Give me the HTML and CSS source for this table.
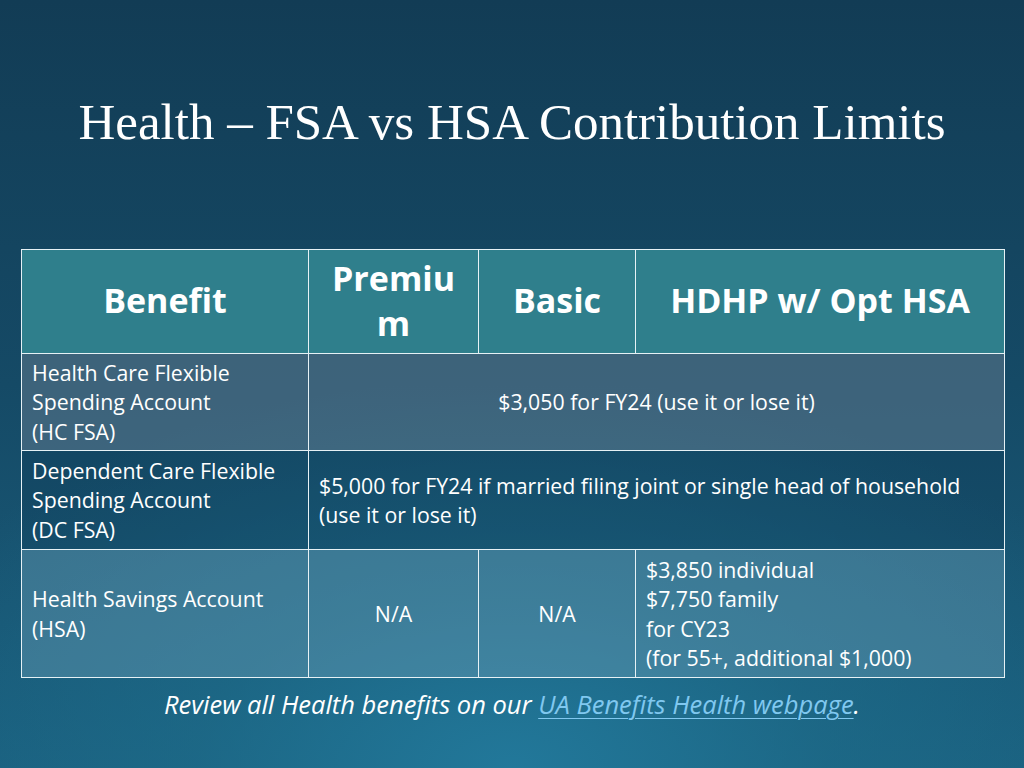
FILE: index.html
```html
<!DOCTYPE html>
<html>
<head>
<meta charset="utf-8">
<link rel="stylesheet" href="styles.css">
</head>
<body>
<div class="slide">
  <h1 class="title">Health – FSA vs HSA Contribution Limits</h1>
  <table class="limits">
    <colgroup>
      <col class="c1"><col class="c2"><col class="c3"><col class="c4">
    </colgroup>
    <thead>
      <tr class="head">
        <th>Benefit</th>
        <th>Premium</th>
        <th>Basic</th>
        <th>HDHP w/ Opt HSA</th>
      </tr>
    </thead>
    <tbody>
      <tr class="r1">
        <td>Health Care Flexible Spending Account<br>(HC FSA)</td>
        <td colspan="3" class="center">$3,050 for FY24 (use it or lose it)</td>
      </tr>
      <tr class="r2">
        <td>Dependent Care Flexible Spending Account<br>(DC FSA)</td>
        <td colspan="3">$5,000 for FY24 if married filing joint or single head of household (use it or lose it)</td>
      </tr>
      <tr class="r3">
        <td>Health Savings Account<br>(HSA)</td>
        <td class="center">N/A</td>
        <td class="center">N/A</td>
        <td>$3,850 individual<br>$7,750 family<br>for CY23<br>(for 55+, additional $1,000)</td>
      </tr>
    </tbody>
  </table>
  <p class="note">Review all Health benefits on our <a href="#">UA Benefits Health webpage</a>.</p>
</div>
</body>
</html>
```

FILE: styles.css
```css
html, body {
  margin: 0;
  padding: 0;
}
body {
  width: 1024px;
  height: 768px;
  overflow: hidden;
}
.slide {
  width: 1024px;
  height: 768px;
  box-sizing: border-box;
  padding-top: 88px;
  background:
    radial-gradient(ellipse 900px 520px at 50% 100%, #22789a 0%, rgba(30,110,140,0.6) 35%, rgba(20,70,100,0) 75%),
    linear-gradient(180deg, #123c55 0%, #154a66 50%, #1a5f7e 100%);
  color: #fff;
}
.title {
  margin: 0;
  font-family: "Liberation Serif", "Times New Roman", serif;
  font-weight: normal;
  font-size: 51px;
  line-height: 68px;
  text-align: center;
  color: #fff;
}
.limits {
  margin: 93px 0 0 21px;
  width: 983px;
  border-collapse: collapse;
  table-layout: fixed;
  font-family: "Open Sans", "Noto Sans", sans-serif;
  font-size: 21.3px;
  line-height: 29.3px;
  color: #fff;
}
.c1 { width: 287px; }
.c2 { width: 170px; }
.c3 { width: 157px; }
.c4 { width: 369px; }
.limits th, .limits td {
  border: 1.5px solid #e6f1f5;
  padding: 0 10px;
  vertical-align: middle;
  text-align: left;
}
.head th {
  height: 101px;
  background: #2f7f8c;
  font-size: 34px;
  line-height: 45px;
  font-weight: bold;
  text-align: center;
  overflow-wrap: anywhere;
  word-break: break-all;
  padding-bottom: 2px;
}
.r1 td {
  height: 96px;
  background: rgba(95, 120, 140, 0.55);
}
.r2 td {
  height: 98px;
  background: rgba(10, 50, 80, 0.25);
}
.r3 td {
  height: 127px;
  background: rgba(115, 165, 190, 0.38);
}
.limits td.center {
  text-align: center;
}
.note {
  margin: 6px 0 0;
  font-family: "Open Sans", "Noto Sans", sans-serif;
  font-style: italic;
  font-size: 25.5px;
  line-height: 40px;
  text-align: center;
  color: #fff;
}
.note a {
  color: #80c8f0;
  text-decoration: underline;
  text-decoration-thickness: 1px;
  text-underline-offset: 4px;
}
```
